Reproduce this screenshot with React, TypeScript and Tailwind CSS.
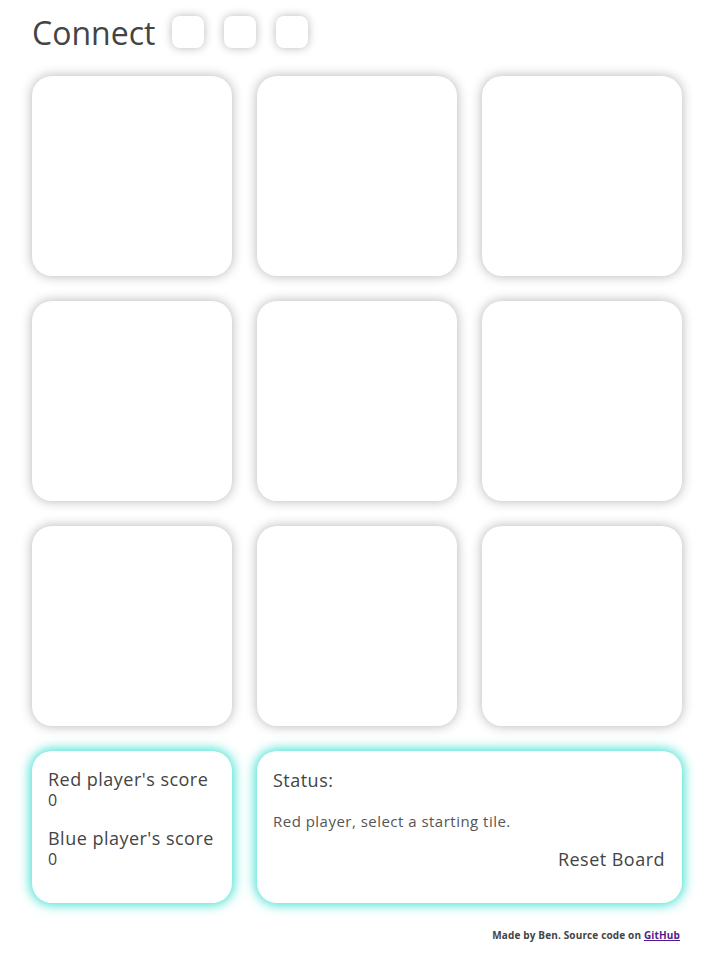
import React from "react";

const tile = "w-[200px] h-[200px] rounded-[20px] bg-white shadow-[0_0_12px_rgba(0,0,0,0.3)]";
const panel = "rounded-[20px] bg-white shadow-[0_0_12px_2px_#40e0d0] h-[152px]";

export default function App() {
  return (
    <div className="min-h-[953px] bg-white text-[#444] px-8 pt-4" style={{ fontFamily: "'Open Sans', 'Noto Sans', sans-serif" }}>
      <div className="flex items-center h-8">
        <h1 className="text-[32px] leading-none text-[#444] mb-[-2px]">Connect</h1>
        <div className="flex items-center gap-5 ml-[17px]">
          <div className="w-8 h-8 rounded-lg bg-white shadow-[0_0_10px_rgba(0,0,0,0.28)]" />
          <div className="w-8 h-8 rounded-lg bg-white shadow-[0_0_10px_rgba(0,0,0,0.28)]" />
          <div className="w-8 h-8 rounded-lg bg-white shadow-[0_0_10px_rgba(0,0,0,0.28)]" />
        </div>
      </div>
      <div className="grid grid-cols-[200px_200px_200px] gap-[25px] mt-7">
        {Array.from({ length: 9 }).map((_, i) => (
          <div key={i} className={tile} />
        ))}
        <div className={`${panel} px-4 pt-[17px] tracking-[0.03em]`}>
          <div className="text-[18px] leading-[22px]">Red player's score</div>
          <div className="text-[16px] leading-[20px]">0</div>
          <div className="text-[18px] leading-[22px] mt-[17px]">Blue player's score</div>
          <div className="text-[16px] leading-[20px]">0</div>
        </div>
        <div className={`${panel} col-span-2 pl-4 pr-[17px] pt-[18px] flex flex-col tracking-[0.03em]`}>
          <div className="text-[18px] leading-[22px]">Status:</div>
          <div className="text-[15px] leading-[20px] mt-[20px] text-[#555]">Red player, select a starting tile.</div>
          <div className="text-[18px] leading-[22px] text-right mt-[17px]">Reset Board</div>
        </div>
      </div>
      <div className="text-right text-[10px] leading-[14px] font-bold text-[#444] mt-[25px] tracking-[0.015em]">
        Made by Ben. Source code on <a href="#" className="text-[#551a8b] underline">GitHub</a>
      </div>
    </div>
  );
}
